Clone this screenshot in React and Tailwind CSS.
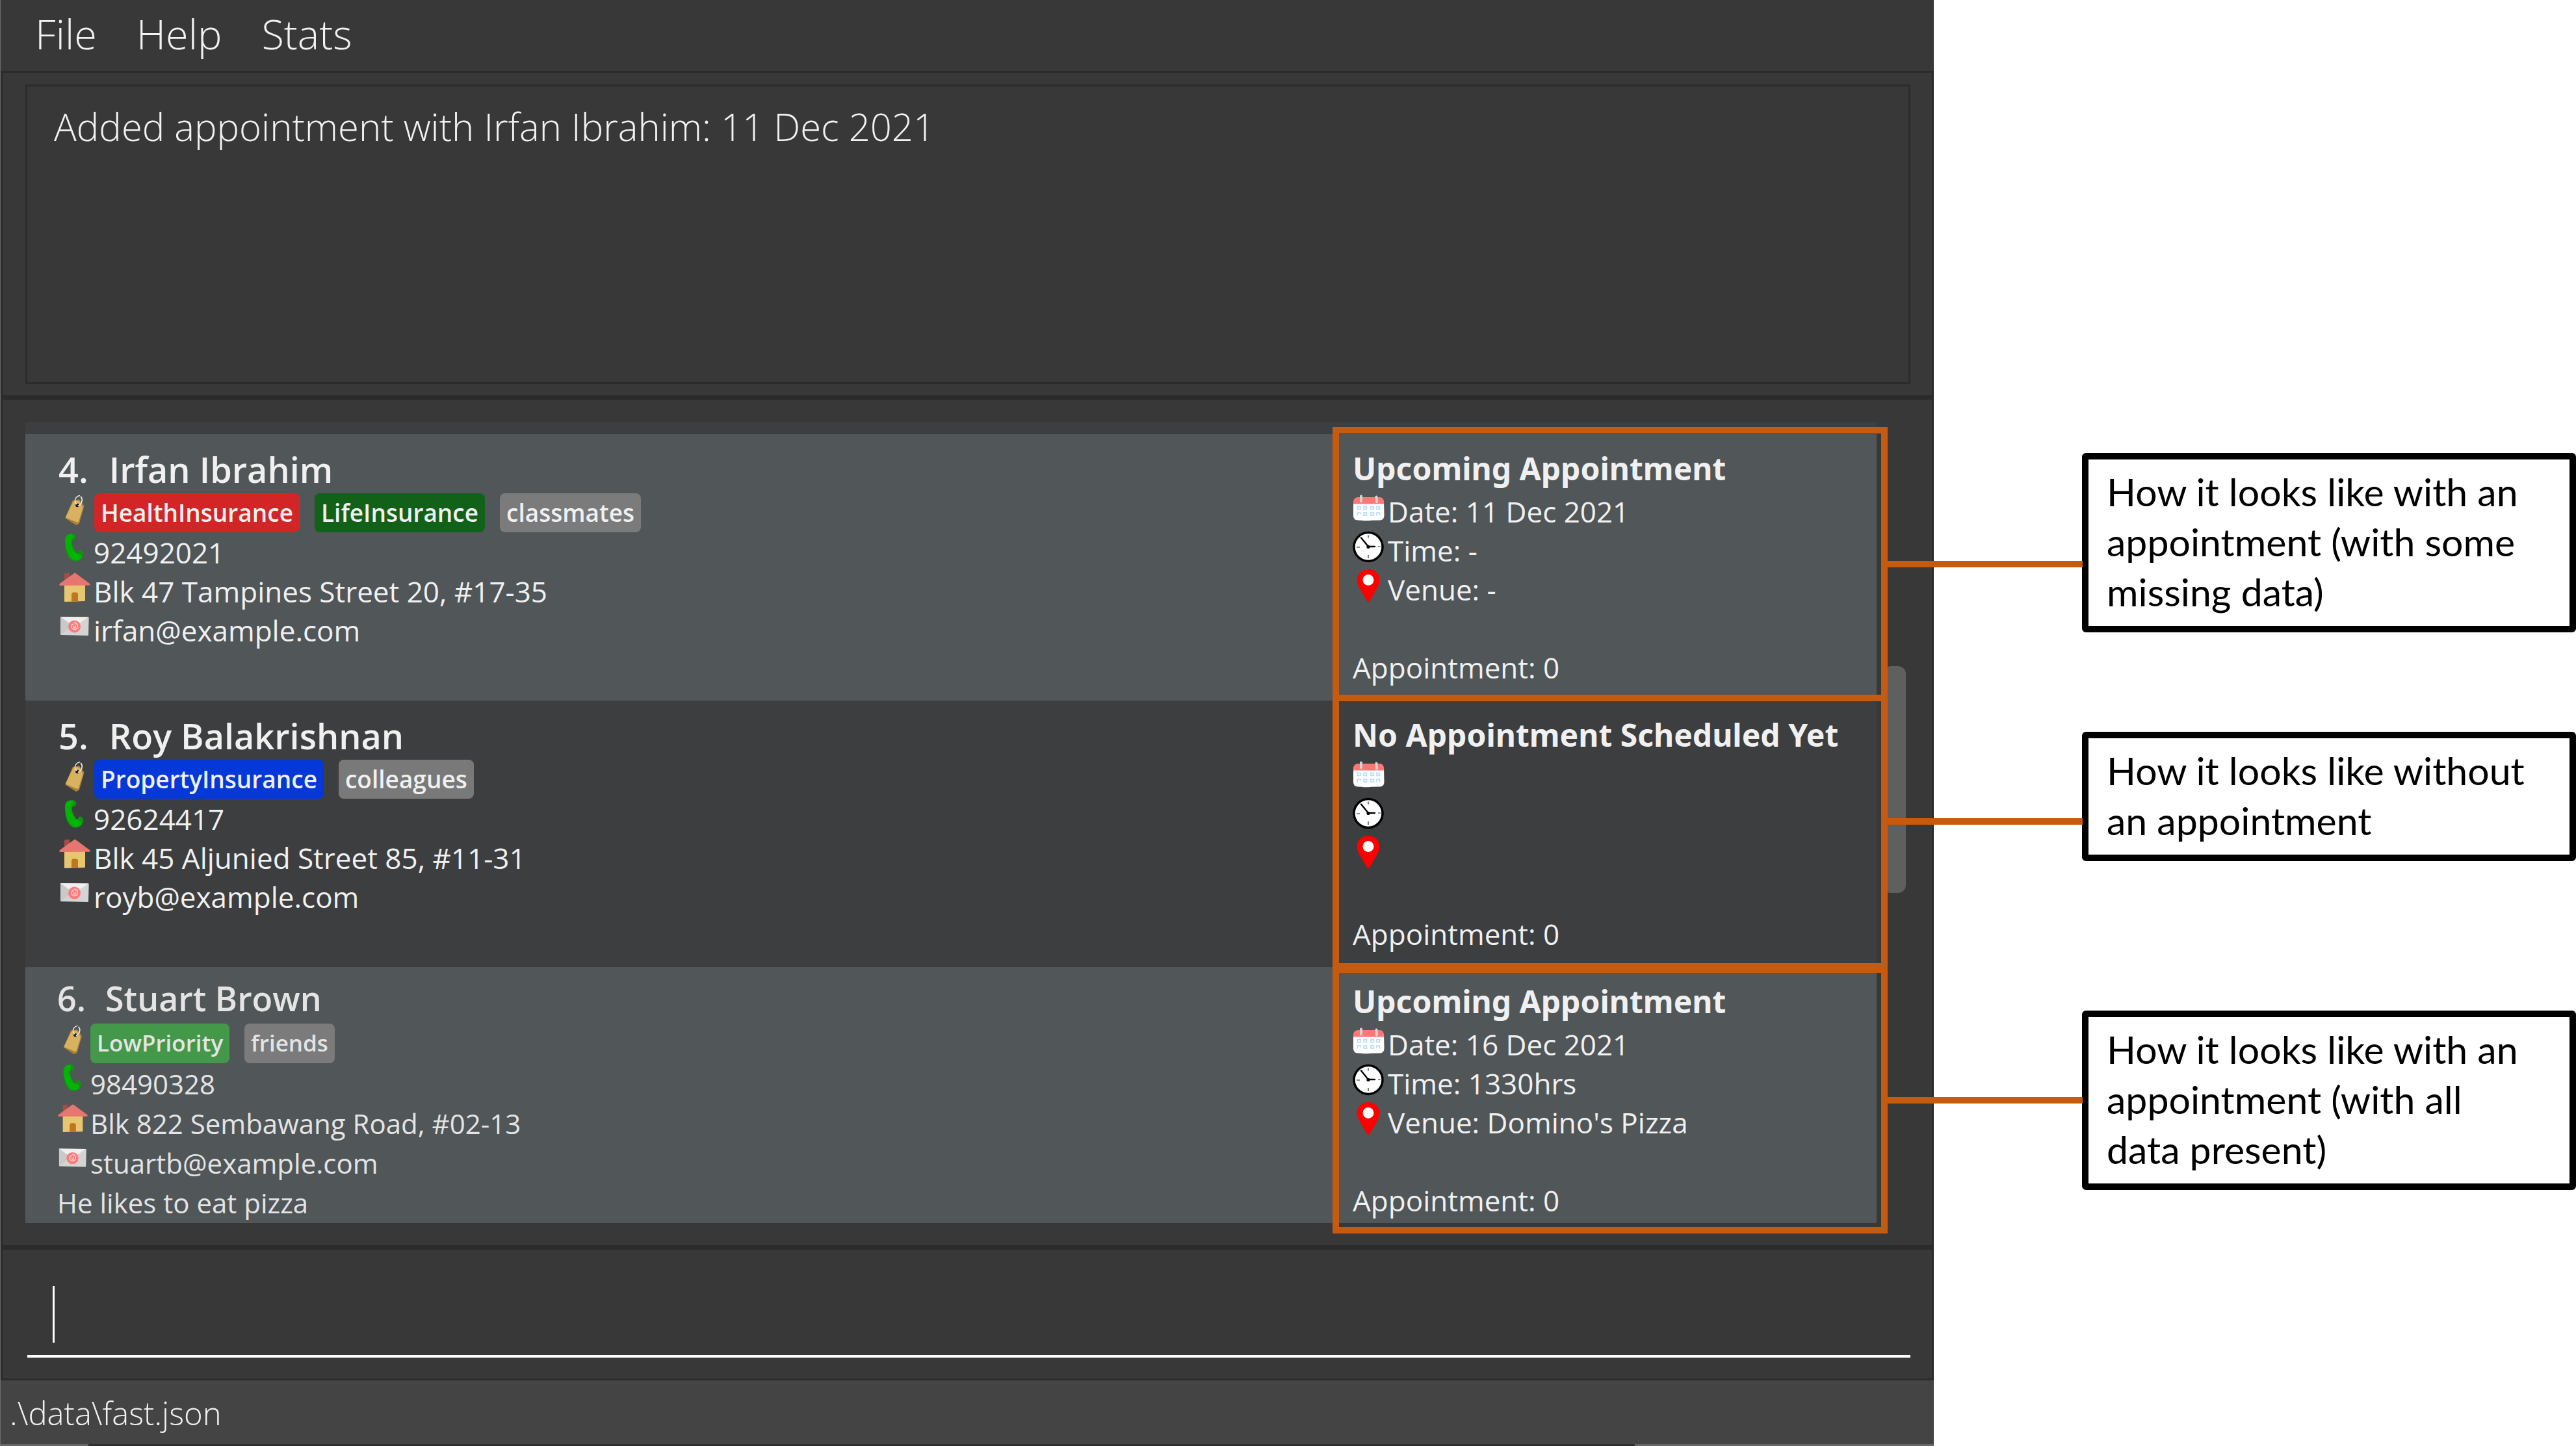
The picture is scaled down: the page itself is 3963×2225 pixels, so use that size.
const MENUS = ["File", "Help", "Stats"];

const CLIENTS = [
  {
    id: 4,
    name: "Irfan Ibrahim",
    tags: [
      { label: "HealthInsurance", color: "bg-[#d32526]" },
      { label: "LifeInsurance", color: "bg-[#126119]" },
      { label: "classmates", color: "bg-[#7a7b7a]" },
    ],
    phone: "92492021",
    address: "Blk 47 Tampines Street 20, #17-35",
    email: "irfan@example.com",
    title: "Upcoming Appointment",
    date: "Date: 11 Dec 2021",
    time: "Time: -",
    venue: "Venue: -",
    row: "h-[410px] bg-[#515658]",
    frame: "-top-[11px] -bottom-px",
    line: "top-1/2 -mt-[5px]",
  },
  {
    id: 5,
    name: "Roy Balakrishnan",
    tags: [
      { label: "PropertyInsurance", color: "bg-[#0438d8]" },
      { label: "colleagues", color: "bg-[#797979]" },
    ],
    phone: "92624417",
    address: "Blk 45 Aljunied Street 85, #11-31",
    email: "royb@example.com",
    title: "No Appointment Scheduled Yet",
    date: "",
    time: "",
    venue: "",
    row: "h-[410px] bg-[#3c3e3f]",
    frame: "-top-[9px] -bottom-1",
    line: "top-[180px]",
  },
  {
    id: 6,
    name: "Stuart Brown",
    compact: true,
    tags: [
      { label: "LowPriority", color: "bg-[#43984a]" },
      { label: "friends", color: "bg-[#7a7b7a]" },
    ],
    phone: "98490328",
    address: "Blk 822 Sembawang Road, #02-13",
    email: "stuartb@example.com",
    memo: "He likes to eat pizza",
    title: "Upcoming Appointment",
    date: "Date: 16 Dec 2021",
    time: "Time: 1330hrs",
    venue: "Venue: Domino's Pizza",
    row: "h-[394px] bg-[#515658]",
    frame: "-top-px -bottom-4",
    line: "top-1/2 -mt-[5px]",
  },
];

function TagIcon() {
  return (
    <svg viewBox="0 0 50 50" className="block size-full" aria-hidden="true">
      <path d="M11.500 38l11-26 9-1.500 7 9-7.500 26.500-4 2z" fill="#a9803b" stroke="#a9803b" strokeWidth="2" strokeLinejoin="round" />
      <path d="M11 36.500L22 14q1-2 3.500-2.500l4-.5q2 0 3 1.500l4.500 8q.700 1.300.300 3L31 43.500q-.700 1.800-2.500 1.200L12 38q-1.300-.500-1-1.500z" fill="#d8b25e" />
      <circle cx="29" cy="18.500" r="2.800" fill="#1d1a14" />
      <path d="M28 17q-4-4-2-8.500 2-4 7-5" fill="none" stroke="#e6e6e6" strokeWidth="1.500" />
      <path d="M30 19.500q5.500-2.500 6-7.500Q37 8 34 5" fill="none" stroke="#e6e6e6" strokeWidth="1.800" />
    </svg>
  );
}

function PhoneIcon() {
  return (
    <svg viewBox="0 0 50 50" className="block size-full" aria-hidden="true">
      <path d="M18 2.500q6-2 9 2.500 1.500 5-2.500 7l-3.500.700q-.500 5 1.500 9.500 2 5.500 5.500 9.500 2-.700 3-3 3-2.500 6 .500 2.500 3.500.500 8-3 7-11 7.500-8 0-12.500-9-4-8-4-18.500 0-12.500 8-14.700z" fill="#138f16" />
      <path d="M16 3q5-1.500 6.500 2 .500 3.500-2.500 6.500-2 4.500 1.500 12 3 7 7 9.500 3.500 0 5 1 3 2 1 6-3 3.500-8 3.500-6 0-10.500-8Q11.500 27 10 15 9.500 5 16 3z" fill="#04b404" />
    </svg>
  );
}

function HouseIcon() {
  return (
    <svg viewBox="0 0 50 50" className="block size-full" aria-hidden="true">
      <path d="M9 14V4.500Q9 3 10.500 3l5-.500q1.500 0 1.500 1.500v8z" fill="#a34c48" />
      <path d="M9 19h32v26q0 1-1 1l-30 1q-1 0-1-1z" fill="#e6c66f" />
      <path d="M25 2.500q1 0 2 1L48 19q2 2.500-1.500 2.800l-43.500.200q-3-.500-1-3L23.500 3.500q.700-1 1.500-1z" fill="#e57670" />
      <path d="M20 46.500V36q0-3.500 3-3.500h4q3 0 3 3.500v10.500z" fill="#bd7720" />
    </svg>
  );
}

function MailIcon() {
  return (
    <svg viewBox="0 0 50 50" className="block size-full" aria-hidden="true">
      <path d="M3 10l43 .500q.700 0 .700 1L46 38q0 1-1 1L4 38q-1 0-1-1z" fill="#d4d4d4" />
      <path d="M3 10l43 .500-19 13q-3 2-6 0z" fill="#efefef" />
      <path d="M3 10l19 14-18.500 13.500z" fill="#c9c9c9" />
      <circle cx="24.500" cy="25" r="9.500" fill="#fb7b7c" />
      <path d="M24 21q-4 .500-4 4.500.500 4 5 4 4.500-.500 4.500-5-.500-5-5.500-5.500M24 24.500q-1.500 1.500.500 2.500 2.500-.500 1.500-3.500" fill="none" stroke="#ffd3d3" strokeWidth="1.500" />
    </svg>
  );
}

function CalendarIcon() {
  return (
    <svg viewBox="0 0 50 50" className="block size-full" aria-hidden="true">
      <path d="M1 15h47l.500 22q0 7-6 7.500l-14 .300q-8 1-15 0L8 44.500q-7-.500-7-7z" fill="#fff" />
      <path d="M1 19.500v-3Q1 9.500 8 9h34q6 .500 6 8v2.500z" fill="#fd7777" />
      <path d="M13 7.500v8M36.500 8.500l.500 8" stroke="#d3d3d3" strokeWidth="4" strokeLinecap="round" />
      <g fill="none" stroke="#b4daf8" strokeWidth="1.600">
        <rect x="7.500" y="23.500" width="4.500" height="4" />
        <rect x="17" y="23.500" width="4.500" height="4" />
        <rect x="28" y="23.500" width="4.500" height="4" />
        <rect x="37" y="23.500" width="4.500" height="4" />
        <path d="M7.500 37.500V33H12v2.500" />
        <rect x="17" y="33" width="4.500" height="4" />
        <rect x="28" y="33" width="4.500" height="4" />
        <path d="M37 37.500V33h4.500v4.500" />
      </g>
    </svg>
  );
}

function ClockIcon() {
  return (
    <svg viewBox="0 0 50 50" className="block size-full" aria-hidden="true">
      <circle cx="24" cy="25.500" r="22" fill="#fff" stroke="#000" strokeWidth="3.500" />
      <path d="M24 7.500v4M24 38v5M6 26h5M39 25h4" stroke="#222" strokeWidth="1.200" />
      <path d="M13 11.500l11 13.500h10" fill="none" stroke="#000" strokeWidth="2.400" strokeLinecap="round" strokeLinejoin="round" />
      <circle cx="24" cy="25.500" r="2.600" />
    </svg>
  );
}

function PinIcon() {
  return (
    <svg viewBox="0 0 50 50" className="block size-full overflow-visible" aria-hidden="true">
      <path d="M24 0q17 1 17.500 17.500-.500 6-5.500 14L26 49q-2 2-4 0L12 31.500q-5-8-5.500-14Q7 1 24 0z" fill="#fe0000" />
      <circle cx="24" cy="16.500" r="8.500" fill="#fff" />
    </svg>
  );
}

function Detail({ icon, children, compact }) {
  return (
    <div className={compact ? "flex h-[61px] text-[42px] leading-[63px]" : "flex h-15 text-[44px] leading-[62px]"}>
      <span className={compact ? "mr-[3px] size-12 shrink-0" : "mr-1 size-[50px] shrink-0"}>{icon}</span>
      <span className="whitespace-nowrap">{children}</span>
    </div>
  );
}

function ClientCard({ client }) {
  const c = client.compact;
  return (
    <li className={`relative flex ${client.row}`}>
      <div className={c ? "flex-1 pl-[49px] pt-3 text-[#e4e4e4]" : "flex-1 pl-[51px] pt-[18px] text-[#f0f0f0]"}>
        <h2
          className={
            c
              ? "flex h-[75px] gap-[30px] text-[52px] font-semibold leading-[72px]"
              : "flex h-[73px] gap-8 text-[54px] font-semibold leading-[72px]"
          }
        >
          <span>{client.id}.</span>
          <span>{client.name}</span>
        </h2>
        <div className={c ? "flex h-[61px]" : "flex h-15"}>
          <span className={c ? "mr-[3px] size-12" : "mr-[5px] size-[50px]"}>
            <TagIcon />
          </span>
          <ul className={c ? "flex gap-[23px] text-[35px] leading-[59px]" : "flex gap-[23px] text-[37px] leading-[60px]"}>
            {client.tags.map((t) => (
              <li key={t.label} className={`h-full rounded-lg px-[10px] font-semibold ${t.color}`}>
                {t.label}
              </li>
            ))}
          </ul>
        </div>
        <Detail compact={c} icon={<PhoneIcon />}>{client.phone}</Detail>
        <Detail compact={c} icon={<HouseIcon />}>{client.address}</Detail>
        <Detail compact={c} icon={<MailIcon />}>{client.email}</Detail>
        {client.memo && <p className="text-[42px] leading-[63px]">{client.memo}</p>}
      </div>
      <div className="relative w-[837px] pl-[31px] pt-[18px] text-[#f0f0f0]">
        <h3 className="h-[70px] whitespace-nowrap font-['Noto_Sans',sans-serif] text-[48px] font-bold leading-[70px]">
          {client.title}
        </h3>
        <Detail icon={<CalendarIcon />}>{client.date}</Detail>
        <Detail icon={<ClockIcon />}>{client.time}</Detail>
        <Detail icon={<PinIcon />}>{client.venue}</Detail>
        <p className="pt-15 text-[44px] leading-[62px]">Appointment: 0</p>
        <div className={`absolute left-0 -right-[17px] border-10 border-[#c55a11] ${client.frame}`}>
          <span className={`absolute left-full ml-[10px] h-[10px] w-[300px] bg-[#c55a11] ${client.line}`} />
        </div>
      </div>
    </li>
  );
}

function Callout({ children }) {
  return (
    <p className="rounded-md border-10 border-black bg-white pb-[14px] pl-7 pr-14 pt-[11px] text-[59px] leading-[77px] text-black">
      {children}
    </p>
  );
}

export default function App() {
  return (
    <div className="flex min-h-screen w-full bg-white font-['Open_Sans',sans-serif]">
      <main className="flex min-w-0 flex-1 flex-col border-l border-[#6b6b6b] bg-[#383838] text-[#f2f2f2]">
        <nav className="flex h-[109px] gap-[61px] pl-[53px] text-[63px] font-light leading-[103px]">
          {MENUS.map((m) => (
            <button key={m} type="button" className="block h-[103px]">{m}</button>
          ))}
        </nav>
        <div className="flex flex-1 flex-col border-x-3 border-[#2b2b2b]">
          <section className="border-b-7 border-t-3 border-[#2b2b2b] pb-[17px] pl-[35px] pr-[33px] pt-[18px]">
            <div className="h-[461px] border-3 border-[#2b2b2b] pl-[41px] pt-[22px] text-[58px] font-light leading-[80px]">
              <output>Added appointment with Irfan Ibrahim: 11 Dec 2021</output>
            </div>
          </section>
          <section className="flex pb-[34px] pl-[35px] pr-[40px] pt-[34px]">
            <ul className="flex-1 border-t-19 border-[#3c3e3f]">
              {CLIENTS.map((c) => (
                <ClientCard key={c.id} client={c} />
              ))}
            </ul>
            <div className="w-[45px] pl-[10px] pt-[376px]">
              <div className="h-[349px] rounded-xl bg-[#5f5f5f]" />
            </div>
          </section>
          <section className="relative flex-1 border-t-7 border-[#2b2b2b] pl-[38px] pr-[33px] pt-[41px]">
            <input
              aria-label="Command"
              className="block h-[125px] w-full border-b-4 border-white bg-transparent px-10 text-[58px] font-light outline-none"
            />
            <span className="absolute left-[77px] top-[56px] h-[87px] w-[3px] bg-white" />
          </section>
        </div>
        <footer className="border-t-3 border-[#2b2b2b] bg-[#444444]">
          <p className="h-[98px] pl-[14px] text-[49px] font-light leading-[100px]">.\data\fast.json</p>
          <div className="flex h-[3px] bg-[#303030]">
            <span className="w-[135px] bg-[#666666]" />
            <span className="flex-1" />
            <span className="w-[460px] bg-[#666666]" />
          </div>
        </footer>
      </main>
      <aside className="w-[988px] shrink-0 pl-[228px] pt-[697px] font-[Lato,sans-serif]">
        <Callout>How it looks like with an appointment (with some missing data)</Callout>
        <div className="mt-[153px]">
          <Callout>How it looks like without an appointment</Callout>
        </div>
        <div className="mt-[230px]">
          <Callout>How it looks like with an appointment (with all data present)</Callout>
        </div>
      </aside>
    </div>
  );
}
